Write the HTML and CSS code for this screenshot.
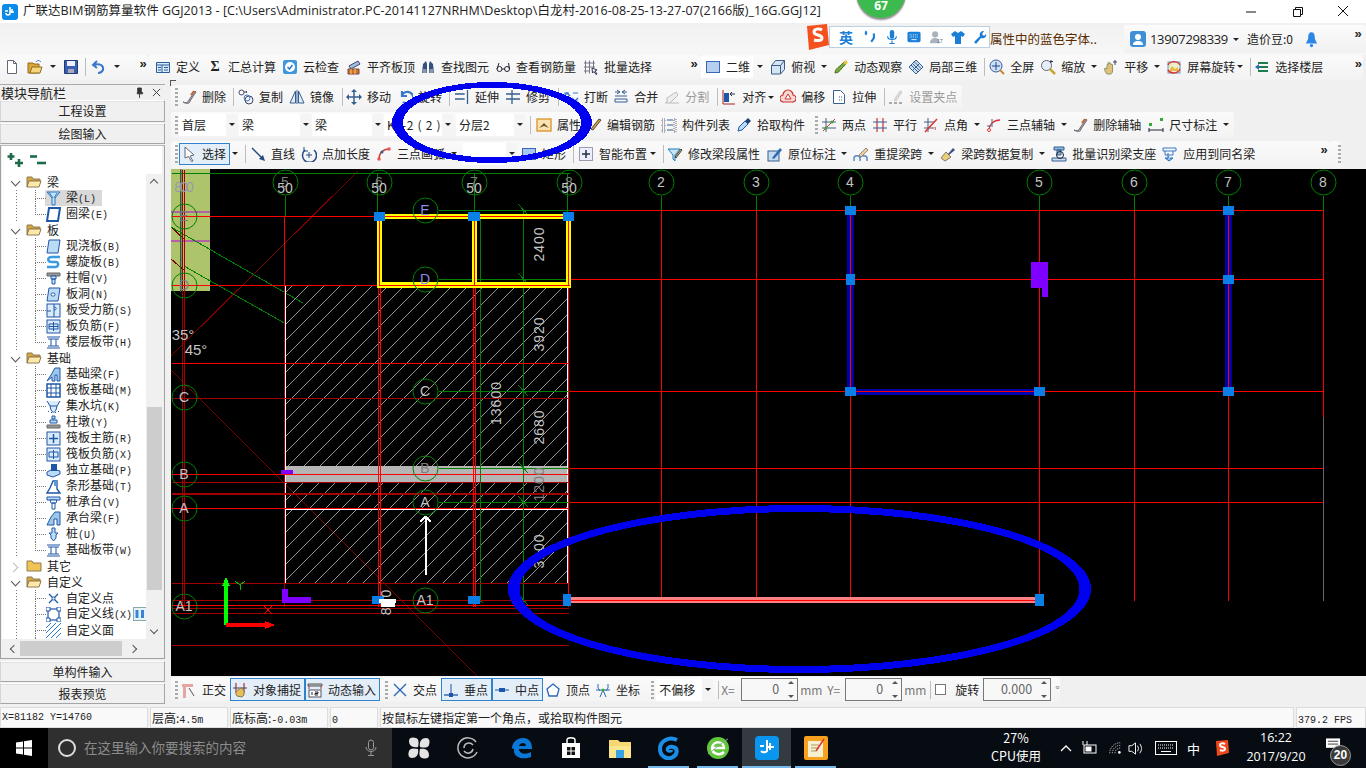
FILE: index.html
```html
<!DOCTYPE html>
<html lang="zh-CN">
<head>
<meta charset="utf-8">
<title>广联达BIM钢筋算量软件 GGJ2013</title>
<link rel="stylesheet" href="styles.css">
</head>
<body>
<div class="app">
  <header class="title">
    <svg class="appicon" viewBox="0 0 16 16"><rect width="16" height="16" rx="3" fill="#0a8be8"/><path d="M8 3v6a2 2 0 0 1-4 0M8 8h4M3 7h3M10 5v4" fill="none" stroke="#fff" stroke-width="1.6"/></svg>
    <span class="title-text">广联达BIM钢筋算量软件 GGJ2013 - [C:\Users\Administrator.PC-20141127NRHM\Desktop\白龙村-2016-08-25-13-27-07(2166版)_16G.GGJ12]</span>
    <div class="winbtns">
      <svg viewBox="0 0 46 23"><path d="M18 12h10" stroke="#111" fill="none"/></svg>
      <svg viewBox="0 0 46 23"><path d="M19.500 9.500h7v7h-7zM21.500 9V7.500h7v7H27" stroke="#111" fill="none"/></svg>
      <svg viewBox="0 0 46 23"><path d="M18 6l10 10M28 6 18 16" stroke="#111" fill="none"/></svg>
    </div>
  </header>

  <div class="menu">
    <span class="hint">属性中的蓝色字体..</span>
    <div class="account">
      <svg class="ava" viewBox="0 0 16 16"><rect width="16" height="16" rx="3" fill="#3f8fd6"/><circle cx="8" cy="6" r="3" fill="#fff"/><path d="M3 14c0-3 2-4 5-4s5 1 5 4z" fill="#fff"/></svg>
      <span class="phone">13907298339</span>
      <i class="ar"></i>
      <span class="beans">造价豆:0</span>
      <svg class="bell" viewBox="0 0 16 20"><path d="M8 1c-3 0-4 3-4 6 0 4-2 6-3 8h14c-1-2-3-4-3-8 0-3-1-6-4-6z" fill="#2c86e8"/><circle cx="8" cy="17.500" r="2" fill="#2c86e8"/></svg>
      <b class="more">»</b>
    </div>
  </div>

  <div class="row row1">
    <div class="bar">
      <svg class="ib m4" viewBox="0 0 16 16"><path d="M3.500 1.500h6l3 3v10h-9z" fill="#fff" stroke="#667"/><path d="M9.500 1.500v3h3" fill="none" stroke="#667"/></svg>
      <svg class="ib m7" viewBox="0 0 16 16"><path d="M1 4h5l1 1h5v9H1z" fill="#d9a53c" stroke="#8f6d1c"/><path d="M3 14l2-6h10l-2 6z" fill="#f5d67e" stroke="#8f6d1c"/><path d="M9 3c1-2 3-2 5 0" fill="none" stroke="#3a78c9"/></svg>
      <i class="ar m4"></i>
      <svg class="ib m4" viewBox="0 0 16 16"><path d="M1.500 1.500h13v13h-13z" fill="#3b5fb0" stroke="#223a78"/><path d="M4 2h8v5H4z" fill="#eef"/><path d="M5 10h6v4H5z" fill="#aab"/></svg>
      <i class="sep m6"></i>
      <svg class="ib m5" viewBox="0 0 16 16"><path d="M6 2 2 6l4 3M3 6c5-2 10 0 9 5-1 2-3 3-5 3" stroke="#3a78c9" stroke-width="2" fill="none"/></svg>
      <i class="ar m4"></i>
      <b class="more m15">»</b>
    </div>
    <div class="bar">
      <div class="t m3"><svg class="ic" viewBox="0 0 16 16"><path d="M1.500 3.500h13v10h-13z" fill="#dcebf8" stroke="#2a5d9c"/><path d="M1.500 6h13M7 6v7.500M3 8.500h3M3 11h3M9 8.500h4M9 11h4" stroke="#2a5d9c" fill="none"/></svg><span>定义</span></div>
      <div class="t"><b class="sigma">Σ</b><span>汇总计算</span></div>
      <div class="t mn1"><svg class="ic" viewBox="0 0 16 16"><rect x="1" y="1" width="14" height="14" rx="2" fill="#3c97dd"/><circle cx="8" cy="8" r="5" fill="#fff"/><path d="M5.500 8l2 2 3-4" stroke="#2a78c0" stroke-width="1.500" fill="none"/></svg><span>云检查</span></div>
      <div class="t"><svg class="ic" viewBox="0 0 16 16"><path d="M3 7l9-5 2 3-9 5z" fill="#9cc0e4" stroke="#446"/><path d="M2 10h11v5H2z" fill="#c9762c" stroke="#744"/><path d="M5 10v5M9 10v5" stroke="#fc6"/></svg><span>平齐板顶</span></div>
      <div class="t mn2"><svg class="ic" viewBox="0 0 16 16"><path d="M2 14l1-9 3-3 1 3v9zM9 14V5l1-3 3 3 1 9z" fill="#33507f"/><rect x="2.500" y="10" width="4" height="4" fill="#89a"/><rect x="9.500" y="10" width="4" height="4" fill="#89a"/></svg><span>查找图元</span></div>
      <div class="t mn1"><svg class="ic" viewBox="0 0 16 16"><circle cx="4.500" cy="10" r="2.500" fill="none" stroke="#223"/><circle cx="12" cy="10" r="2.500" fill="none" stroke="#223"/><path d="M7 10h2.500M2 10l2-6M14.500 10l-1-6" stroke="#223" fill="none"/></svg><span>查看钢筋量</span></div>
      <div class="t"><svg class="ic" viewBox="0 0 16 16"><path d="M2.500 1.500v13M6.500 1.500v13M10.500 1.500v8M1 4h11M1 8h11M1 12h6" stroke="#778" fill="none"/><path d="M9 9l5 2-2 1 2 3-1 .5-2-3-1.500 1.500z" fill="#fff" stroke="#335"/></svg><span>批量选择</span></div>
      <b class="more m34">»</b>
    </div>
    <div class="bar">
      <div class="t m2 white"><svg class="ic" viewBox="0 0 16 16"><rect x="1.500" y="2.500" width="13" height="11" fill="#b6cff0" stroke="#3767b5"/></svg><span>二维</span></div>
      <i class="ar m1"></i>
      <div class="t"><svg class="ic" viewBox="0 0 16 16"><path d="M1.500 6.500l4-5h9v9l-4 4.500h-9z" fill="#d3e4f5" stroke="#3c5d80"/><path d="M1.500 6.500h9v8.500M10.500 6.500l4-5" fill="none" stroke="#3c5d80"/></svg><span>俯视</span></div>
      <i class="ar"></i>
      <div class="t mn1"><svg class="ic" viewBox="0 0 16 16"><path d="M2 14c0-3 2-5 5-7l5-5 2 2-5 5c-2 3-4 5-7 5z" fill="#7aa93c" stroke="#4a7320"/><circle cx="12.500" cy="3.500" r="2" fill="#e8c33c"/></svg><span>动态观察</span></div>
      <div class="t mn1"><svg class="ic" viewBox="0 0 16 16"><path d="M8 1l7 7-7 7-7-7z" fill="#cfe0f2" stroke="#345f8f"/><path d="M4.500 4.500l7 7M11.500 4.500l-7 7M6 2.500l7 7M3 6l7 7" stroke="#345f8f" fill="none"/></svg><span>局部三维</span></div>
      <i class="sep m4"></i>
      <div class="t"><svg class="ic" viewBox="0 0 16 16"><circle cx="7" cy="7" r="6" fill="#cfe0f6" stroke="#3a5e96"/><path d="M7 3v8M3 7h8" stroke="#23468c"/><path d="M11 11l4 4" stroke="#c8892c" stroke-width="2"/></svg><span>全屏</span></div>
      <div class="t mn1"><svg class="ic" viewBox="0 0 16 16"><circle cx="6.500" cy="6.500" r="5" fill="#e6eef8" stroke="#667"/><path d="M10 10l5 5" stroke="#c8a82c" stroke-width="2.500"/><path d="M11 1v3M13 2.500h-3" stroke="#335" fill="none"/></svg><span>缩放</span></div>
      <i class="ar"></i>
      <div class="t mn1"><svg class="ic" viewBox="0 0 16 16"><path d="M4 15c-2-2-3-5-2-6l2 1V6c0-1 1-1 1 0V4c0-1 1.500-1 1.500 0v1c0-1 1.500-1 1.500 0v1c0-1 1.500-1 1.500 0v6c0 2-1 3-2 3z" fill="#e5c07a" stroke="#896"/><path d="M12 1v5M10 3h4" stroke="#446" fill="none"/></svg><span>平移</span></div>
      <i class="ar"></i>
      <div class="t mn1"><svg class="ic" viewBox="0 0 16 16"><rect x="2" y="3" width="12" height="11" fill="#e7f0c9" stroke="#69c"/><path d="M4 10l2-3 3 3 3-2v4H4z" fill="#e8b84a"/><path d="M2 6a7 7 0 0 1 12 0M14 10a7 7 0 0 1-12 1" fill="none" stroke="#d33" stroke-width="1.400"/></svg><span>屏幕旋转</span></div>
      <i class="ar mn4"></i>
      <i class="sep m4"></i>
      <div class="t mn1"><svg class="ic" viewBox="0 0 16 16"><path d="M4 4h10M4 8h10M4 12h10" stroke="#1e7d4c" stroke-width="2"/><path d="M1 8l4-3v6z" fill="#2b6cb8"/></svg><span>选择楼层</span></div>
      <b class="more m27">»</b>
    </div>
  </div>

  <div class="work">
    <aside class="panel">
      <div class="panel-head"><span>模块导航栏</span><div class="pin"><svg viewBox="0 0 10 12"><path d="M3 1h4v5h1.500v1.500h-6V6H3zM5 7.500V12" fill="#333" stroke="#333"/></svg><svg viewBox="0 0 10 10"><path d="M1 1l8 8M9 1 1 9" stroke="#333" fill="none"/></svg></div></div>
      <button class="tab t1">工程设置</button>
      <button class="tab t2">绘图输入</button>
      <div class="frame">
        <div class="tree-tools"><svg viewBox="0 0 18 16"><path d="M4 1v7M.5 4.500h7M12 7v8M8 11h8" stroke="#1d6b4a" stroke-width="2.600" fill="none"/></svg><svg viewBox="0 0 18 16"><path d="M1 4.500h7" stroke="#1d6b4a" stroke-width="2.600"/><path d="M8 11h9" stroke="#1d6b4a" stroke-width="2.600"/></svg></div>
        <div class="tree-body">
          <div class="tree">
            <div class="node"><i class="chev"></i><svg class="folder" viewBox="0 0 16 12"><path d="M1 1h5l1 2h7v2H3l-2 6z" fill="#d9a53c" stroke="#8f7a50"/><path d="M1 11l2-6h12l-2 6z" fill="#fde9a9" stroke="#8f7a50"/></svg><span>梁</span></div>
            <div class="kids">
              <div class="leaf sel"><svg class="ti" viewBox="0 0 15 15"><path d="M1 1h13L9 7v7H6V7z" fill="#c9e4f8" stroke="#2a78c0"/><path d="M3 1l4 6M11 2 8 7" stroke="#2a78c0" fill="none"/></svg><span>梁<em>(L)</em></span></div>
              <div class="leaf"><svg class="ti" viewBox="0 0 15 15"><path d="M3 1h11l-2 13H1z" fill="#fff" stroke="#1f57a8" stroke-width="2"/><path d="M5 3.500h6.500l-1 8H4z" fill="#fff"/></svg><span>圈梁<em>(E)</em></span></div>
            </div>
            <div class="node"><i class="chev"></i><svg class="folder" viewBox="0 0 16 12"><path d="M1 1h5l1 2h7v2H3l-2 6z" fill="#d9a53c" stroke="#8f7a50"/><path d="M1 11l2-6h12l-2 6z" fill="#fde9a9" stroke="#8f7a50"/></svg><span>板</span></div>
            <div class="kids">
              <div class="leaf"><svg class="ti" viewBox="0 0 15 15"><path d="M3 1h11l-2 13H1z" fill="#bcdcf6" stroke="#1f57a8"/></svg><span>现浇板<em>(B)</em></span></div>
              <div class="leaf"><svg class="ti" viewBox="0 0 15 15"><path d="M14 2H6C1 2 1 7 6 7h4c3 0 3 5-1 5H1" fill="none" stroke="#3a9be0" stroke-width="2.500"/></svg><span>螺旋板<em>(B)</em></span></div>
              <div class="leaf"><svg class="ti" viewBox="0 0 15 15"><path d="M1 2h13v3H1z" fill="#999" stroke="#666"/><path d="M5 5h5v3H5zM6 8h3v5H6z" fill="#c9e4f8" stroke="#1f57a8"/></svg><span>柱帽<em>(V)</em></span></div>
              <div class="leaf"><svg class="ti" viewBox="0 0 15 15"><path d="M3 1h11l-2 13H1z" fill="#bcdcf6" stroke="#1f57a8"/><rect x="5" y="6" width="4" height="3" rx="1.500" fill="#fff" stroke="#1f57a8"/></svg><span>板洞<em>(N)</em></span></div>
              <div class="leaf"><svg class="ti" viewBox="0 0 15 15"><rect x="1" y="1" width="13" height="13" fill="#d9ebfa" stroke="#1f57a8"/><path d="M8 1v13M1 8h4M8 4c3 0 3 3 0 3" fill="none" stroke="#1f57a8"/></svg><span>板受力筋<em>(S)</em></span></div>
              <div class="leaf"><svg class="ti" viewBox="0 0 15 15"><rect x="1" y="1" width="13" height="13" fill="#d9ebfa" stroke="#1f57a8"/><path d="M7.500 3v9M3 5h9v5H3zM3 7.500h9" fill="none" stroke="#1f57a8"/></svg><span>板负筋<em>(F)</em></span></div>
              <div class="leaf"><svg class="ti" viewBox="0 0 15 15"><path d="M1 2h13M1 13h13M2 4h11M2 11h11M5 4v7M10 4v7" fill="none" stroke="#1f57a8"/></svg><span>楼层板带<em>(H)</em></span></div>
            </div>
            <div class="node"><i class="chev"></i><svg class="folder" viewBox="0 0 16 12"><path d="M1 1h5l1 2h7v2H3l-2 6z" fill="#d9a53c" stroke="#8f7a50"/><path d="M1 11l2-6h12l-2 6z" fill="#fde9a9" stroke="#8f7a50"/></svg><span>基础</span></div>
            <div class="kids">
              <div class="leaf"><svg class="ti" viewBox="0 0 15 15"><path d="M1 14l4-6 4-7h5v13h-3V8H9v6H6V10z" fill="#9cc6ea" stroke="#1f57a8"/></svg><span>基础梁<em>(F)</em></span></div>
              <div class="leaf"><svg class="ti" viewBox="0 0 15 15"><rect x="1" y="1" width="13" height="13" fill="none" stroke="#1f57a8" stroke-width="1.500"/><path d="M5 1v13M10 1v13M1 5h13M1 10h13" stroke="#1f57a8" fill="none"/></svg><span>筏板基础<em>(M)</em></span></div>
              <div class="leaf"><svg class="ti" viewBox="0 0 15 15"><path d="M1 2l3 5h7l3-5M4 7l1 4c2 3 3 3 5 0l1-4" fill="#d9ebfa" stroke="#1f57a8"/><path d="M2 12l1 1M5 13l1 1M9 13l1 1M12 12l1 1" stroke="#1f57a8"/></svg><span>集水坑<em>(K)</em></span></div>
              <div class="leaf"><svg class="ti" viewBox="0 0 15 15"><path d="M6 1h3v3H6zM4 5h7v3H4z" fill="#bcdcf6" stroke="#1f57a8"/><path d="M1 10h13v3H1z" fill="#999" stroke="#666"/></svg><span>柱墩<em>(Y)</em></span></div>
              <div class="leaf"><svg class="ti" viewBox="0 0 15 15"><rect x="1" y="1" width="13" height="13" fill="#d9ebfa" stroke="#1f57a8"/><path d="M7.500 3v9M3 7.500h9" fill="none" stroke="#1f57a8" stroke-width="1.500"/></svg><span>筏板主筋<em>(R)</em></span></div>
              <div class="leaf"><svg class="ti" viewBox="0 0 15 15"><rect x="1" y="1" width="13" height="13" fill="#d9ebfa" stroke="#1f57a8"/><path d="M3 5h9v5H3zM7.500 3v9" fill="none" stroke="#1f57a8"/></svg><span>筏板负筋<em>(X)</em></span></div>
              <div class="leaf"><svg class="ti" viewBox="0 0 15 15"><path d="M1 9l6-3 7 2v3l-7 3-6-2z" fill="#bcdcf6" stroke="#1f57a8"/><path d="M5 1h6v7H5z" fill="#1f57a8"/></svg><span>独立基础<em>(P)</em></span></div>
              <div class="leaf"><svg class="ti" viewBox="0 0 15 15"><path d="M1 14h13l-3-4V2H7L4 9z" fill="#fff" stroke="#1f57a8" stroke-width="1.400"/><path d="M8 2h3v5H8z" fill="#5f9ad6"/></svg><span>条形基础<em>(T)</em></span></div>
              <div class="leaf"><svg class="ti" viewBox="0 0 15 15"><path d="M1 2h13v3H1z" fill="#bcdcf6" stroke="#1f57a8"/><path d="M4 5h7l-1 3H5zM6 8h3v6H6z" fill="#fff" stroke="#1f57a8"/></svg><span>桩承台<em>(V)</em></span></div>
              <div class="leaf"><svg class="ti" viewBox="0 0 15 15"><path d="M1 14l4-8 4-5h5v13h-3V8H8v6z" fill="#9cc6ea" stroke="#1f57a8"/></svg><span>承台梁<em>(F)</em></span></div>
              <div class="leaf"><svg class="ti" viewBox="0 0 15 15"><path d="M6 1h3v5h3l-2 2v3l-2.500 3L5 11V8L3 6h3z" fill="#bcdcf6" stroke="#1f57a8"/></svg><span>桩<em>(U)</em></span></div>
              <div class="leaf"><svg class="ti" viewBox="0 0 15 15"><path d="M1 2h13M1 13h13M2 4h11M2 11h11M5 4v7M10 4v7" fill="none" stroke="#1f57a8"/></svg><span>基础板带<em>(W)</em></span></div>
            </div>
            <div class="node"><i class="chev closed"></i><svg class="folder" viewBox="0 0 16 12"><path d="M1 1h5l1 2h8v8H1z" fill="#f0c454" stroke="#8f7a50"/></svg><span>其它</span></div>
            <div class="node"><i class="chev"></i><svg class="folder" viewBox="0 0 16 12"><path d="M1 1h5l1 2h7v2H3l-2 6z" fill="#d9a53c" stroke="#8f7a50"/><path d="M1 11l2-6h12l-2 6z" fill="#fde9a9" stroke="#8f7a50"/></svg><span>自定义</span></div>
            <div class="kids">
              <div class="leaf"><svg class="ti" viewBox="0 0 15 15"><path d="M3 3l9 9M12 3l-9 9" stroke="#1f57a8" stroke-width="1.300"/><circle cx="7.500" cy="7.500" r="1.500" fill="#fff" stroke="#1f57a8"/></svg><span>自定义点</span></div>
              <div class="leaf"><svg class="ti" viewBox="0 0 15 15"><rect x="2" y="2" width="11" height="11" fill="none" stroke="#1f57a8" stroke-width="1.200"/><path d="M0 0h4v4H0zM11 0h4v4h-4zM0 11h4v4H0zM11 11h4v4h-4z" fill="#fff" stroke="#1f57a8"/></svg><span>自定义线<em>(X)</em></span><svg class="colicon" viewBox="0 0 14 14"><rect x=".5" y=".5" width="13" height="13" fill="#e8f2fb" stroke="#8aa"/><path d="M2.500 3h3v8h-3zM8 3h3v8H8z" fill="#3a86d6"/></svg></div>
              <div class="leaf"><svg class="ti" viewBox="0 0 15 15"><path d="M0 5 5 0M0 10 10 0M0 15 15 0M5 15 15 5M10 15l5-5" stroke="#2a78d0" fill="none"/></svg><span>自定义面</span></div>
              <div class="leaf"><svg class="ti" viewBox="0 0 15 15"><path d="M1 2h13v11H1z" fill="none" stroke="#334"/></svg><span>自定义构件</span></div>
            </div>
          </div>
          <div class="vscroll"><i class="up"></i><div class="vthumb"></div><i class="down"></i></div>
        </div>
        <div class="hscroll"><i class="left"></i><div class="hthumb"></div><i class="right"></i></div>
      </div>
      <button class="tab t3">单构件输入</button>
      <button class="tab t4">报表预览</button>
    </aside>

    <div class="right">
      <div class="row row2">
        <div class="bar pad">
          <i class="grip m4"></i>
          <div class="t mn1"><svg class="ic" viewBox="0 0 16 16"><path d="M2 13c2 1 5 1 6-2L14 2l1 1-6 9c0 3-4 3-7 1z" fill="#caa" stroke="#667"/><path d="M10 6l3-4" stroke="#c63" stroke-width="2"/></svg><span>删除</span></div>
          <i class="sep m4"></i>
          <div class="t"><svg class="ic" viewBox="0 0 16 16"><circle cx="3.500" cy="3.500" r="2.500" fill="none" stroke="#446"/><circle cx="11" cy="11" r="4" fill="none" stroke="#446"/><circle cx="9" cy="9" r="3" fill="none" stroke="#3a78c9"/><path d="M6 3h3M9 3l-1-1M9 3 8 4" stroke="#446" fill="none"/></svg><span>复制</span></div>
          <div class="t mn1"><svg class="ic" viewBox="0 0 16 16"><path d="M6.500 2 1 14h5.500zM9.500 2 15 14H9.500z" fill="#e6eef8" stroke="#345f8f"/><path d="M8 1v14" stroke="#345f8f"/></svg><span>镜像</span></div>
          <i class="sep m5"></i>
          <div class="t mn1"><svg class="ic" viewBox="0 0 16 16"><path d="M8 1v14M1 8h14" stroke="#345f8f" stroke-width="1.500"/><path d="M8 0l3 3H5zM8 16l3-3H5zM0 8l3-3v6zM16 8l-3-3v6z" fill="#345f8f"/></svg><span>移动</span></div>
          <div class="t mn1"><svg class="ic" viewBox="0 0 16 16"><path d="M5 2v5h5M5 6a6 6 0 1 1 1 7" fill="none" stroke="#3a78c9" stroke-width="2.200"/></svg><span>旋转</span></div>
          <i class="sep m4"></i>
          <div class="t"><svg class="ic" viewBox="0 0 16 16"><path d="M1 5h9M1 10h9M13.500 1v14" stroke="#345f8f" stroke-width="1.300" fill="none"/><path d="M10 5h2M10 10h2" stroke="#345f8f" stroke-dasharray="1 1"/></svg><span>延伸</span></div>
          <div class="t mn1"><svg class="ic" viewBox="0 0 16 16"><path d="M1 5h14M1 10h14M7 1v14" stroke="#345f8f" stroke-width="1.300" fill="none"/></svg><span>修剪</span></div>
          <i class="sep m5"></i>
          <div class="t"><svg class="ic" viewBox="0 0 16 16"><path d="M1 4h5M1 12h5M10 4h5M10 12h5" stroke="#3a78c9" fill="none"/><path d="M1 7l3-3 3 3M9 9l3 3 3-3" stroke="#3a78c9" fill="none" stroke-width="1.500"/></svg><span>打断</span></div>
          <div class="t mn2"><svg class="ic" viewBox="0 0 16 16"><path d="M2 10h12v3H2z" fill="none" stroke="#345f8f"/><path d="M2 3h5M9 3h5M4 1l3 2-3 2M12 1 9 3l3 2M2 7h12" stroke="#345f8f" fill="none"/></svg><span>合并</span></div>
          <div class="t mn1 off"><svg class="ic" viewBox="0 0 16 16"><path d="M1 14h14M3 14V9l9-6 2 3-8 8" fill="#eee" stroke="#bbb"/></svg><span>分割</span></div>
          <i class="sep m5"></i>
          <div class="t mn1"><svg class="ic" viewBox="0 0 16 16"><path d="M2 1v14h12" stroke="#a22" fill="none"/><path d="M3 4h5v9H3z" fill="#1f57a8"/><path d="M14 5H9M11 3 9 5l2 2" stroke="#234" fill="none"/></svg><span>对齐</span></div>
          <i class="ar mn4"></i>
          <div class="t mn1"><svg class="ic" viewBox="0 0 16 16"><path d="M4 13a3.500 3.500 0 0 1-1-7 5 5 0 0 1 10 0 3.500 3.500 0 0 1-1 7z" fill="#f4d9d0" stroke="#c33" stroke-width="1.200"/><path d="M8 5l3 5H5z" fill="#fff" stroke="#c33"/></svg><span>偏移</span></div>
          <div class="t mn1"><svg class="ic" viewBox="0 0 16 16"><path d="M2.500 1.500h7l4 4v9h-11z" fill="#fff" stroke="#345f8f"/><path d="M8 8h4M8 11h4" stroke="#345f8f" stroke-dasharray="1 1"/></svg><span>拉伸</span></div>
          <i class="sep m5"></i>
          <div class="t mn1 off"><svg class="ic" viewBox="0 0 16 16"><path d="M6 11 12 2l2 1-6 9z" fill="#ddd" stroke="#ccc"/><path d="M1 14h3M6 14h3M11 14h3" stroke="#aaa" stroke-width="2"/></svg><span>设置夹点</span></div>
        </div>
      </div>

      <div class="row row3">
        <div class="bar">
          <i class="grip m4"></i>
          <div class="combo c1 m1"><span>首层</span><i class="ar"></i></div>
          <div class="combo c2 m2"><span>梁</span><i class="ar"></i></div>
          <div class="combo c3 m1"><span>梁</span><i class="ar"></i></div>
          <div class="combo c4 wide m1"><span>KL-2 ( 2 )</span><i class="ar"></i></div>
          <div class="combo c4 m3"><span>分层2</span><i class="ar"></i></div>
          <i class="sep m5"></i>
          <div class="t m1"><svg class="ic" viewBox="0 0 16 16"><rect x="1" y="2" width="14" height="12" fill="#fbe2b0" stroke="#d99326" stroke-width="1.300"/><path d="M3 11l5-5 5 5-5-2z" fill="#6a5a2a"/></svg><span>属性</span></div>
          <div class="t mn2"><svg class="ic" viewBox="0 0 16 16"><path d="M5 12 13 2l2 1-8 10z" fill="#e5a03c" stroke="#444"/></svg><span>编辑钢筋</span></div>
          <div class="t mn1"><svg class="ic" viewBox="0 0 16 16"><path d="M1 2h3v3H1zM1 7h3v3H1zM1 12h3v3H1zM13 2h2v13h-2z" fill="none" stroke="#667" stroke-dasharray="1 1"/><path d="M6 3h6M6 8h6M6 13h6" stroke="#345f8f"/></svg><span>构件列表</span></div>
          <div class="t mn1"><svg class="ic" viewBox="0 0 16 16"><path d="M2 14l1-4 6-6 3 3-6 6z" fill="#bcdcf6" stroke="#1f57a8"/><path d="M9 4l3-3 3 3-3 3z" fill="#1f3f78"/></svg><span>拾取构件</span></div>
        </div>
        <div class="bar">
          <i class="grip m7"></i>
          <div class="t mn1"><svg class="ic" viewBox="0 0 16 16"><path d="M1 5h14M1 11h14M5 1v14" stroke="#4a5a80"/><path d="M2 14 14 2" stroke="#b33"/><circle cx="5" cy="11" r="1.500" fill="#3a3"/><circle cx="11" cy="5" r="1.500" fill="#3a3"/></svg><span>两点</span></div>
          <div class="t mn1"><svg class="ic" viewBox="0 0 16 16"><path d="M5 1v14M11 1v14" stroke="#c33" stroke-width="1.200"/><path d="M1 5h14M1 11h14" stroke="#335a9a" stroke-width="1.200"/></svg><span>平行</span></div>
          <div class="t mn1"><svg class="ic" viewBox="0 0 16 16"><path d="M5 1v14M1 5h10M1 11h10" stroke="#4a5a80"/><path d="M2 15 14 2" stroke="#d33" stroke-width="1.500"/><path d="M12 10a3 3 0 0 1 0 3" stroke="#d33" fill="none"/></svg><span>点角</span></div>
          <i class="ar"></i>
          <div class="t mn1"><svg class="ic" viewBox="0 0 16 16"><path d="M3 14C3 7 8 3 14 3" fill="none" stroke="#d33" stroke-width="1.300"/><path d="M1 9h6M6 2v6" stroke="#4a5a80"/><circle cx="3" cy="13" r="1.500" fill="#fff" stroke="#d33"/></svg><span>三点辅轴</span></div>
          <i class="ar"></i>
          <div class="t mn2"><svg class="ic" viewBox="0 0 16 16"><path d="M2 13c2 1 5 1 6-2L14 2l1 1-6 9c0 3-4 3-7 1z" fill="#caa" stroke="#667"/><path d="M10 6l3-4" stroke="#c63" stroke-width="2"/></svg><span>删除辅轴</span></div>
          <div class="t"><svg class="ic" viewBox="0 0 16 16"><path d="M1 11v4M15 11v4M1 13h14" stroke="#223"/><rect x="1" y="6" width="3" height="3" fill="#3a3"/><rect x="12" y="1" width="3" height="3" fill="#3a3"/></svg><span>尺寸标注</span></div>
          <i class="ar"></i>
        </div>
      </div>

      <div class="row row4">
        <div class="bar">
          <i class="grip m4"></i>
          <div class="t sel m1"><svg class="ic" viewBox="0 0 16 16"><path d="M4 1l9 8-4 1 3 5-1.500 .5-3-5L4 12z" fill="#fff" stroke="#667"/></svg><span>选择</span></div>
          <i class="ar mn1"></i>
          <i class="sep m4"></i>
          <div class="t"><svg class="ic" viewBox="0 0 16 16"><path d="M2 2l11 11" stroke="#234a80" stroke-width="1.500"/><path d="M15 15l-6-2 4-4z" fill="#234a80"/></svg><span>直线</span></div>
          <div class="t mn1"><svg class="ic" viewBox="0 0 16 16"><path d="M13 4a7 7 0 1 1-9 0" fill="none" stroke="#234a80" stroke-width="1.500"/><path d="M3 1v4h4" fill="none" stroke="#234a80"/><path d="M8 6v6M5 9h6" stroke="#234a80"/></svg><span>点加长度</span></div>
          <div class="t mn1"><svg class="ic" viewBox="0 0 16 16"><path d="M3 13C3 7 7 3 13 3" fill="none" stroke="#c43" stroke-width="1.500"/><circle cx="3" cy="13" r="1.800" fill="#e55"/><circle cx="13" cy="3" r="1.800" fill="#e55"/><circle cx="6" cy="6" r="1.500" fill="#345f8f"/></svg><span>三点画弧</span></div>
          <i class="ar"></i>
          <div class="combo c5 m3"><span></span><i class="ar"></i></div>
          <div class="t"><svg class="ic" viewBox="0 0 16 16"><rect x="1.500" y="2.500" width="13" height="11" fill="#a9c7ee" stroke="#3767b5"/></svg><span>矩形</span></div>
          <i class="sep m4"></i>
          <div class="t"><svg class="ic" viewBox="0 0 16 16"><path d="M1.500 1.500h13v13h-13z" fill="#eef" stroke="#446" stroke-dasharray="1 1"/><path d="M8 4v8M4 8h8" stroke="#234" stroke-width="1.500"/></svg><span>智能布置</span></div>
          <i class="ar mn3"></i>
          <i class="sep m4"></i>
          <div class="t mn1"><svg class="ic" viewBox="0 0 16 16"><path d="M1 3h12L8 9v6l-2-2V9z" fill="#c9e4f8" stroke="#1f7db8"/><path d="M8 11 14 3l1 1-6 8z" fill="#e8b84a" stroke="#444"/></svg><span>修改梁段属性</span></div>
          <div class="t"><svg class="ic" viewBox="0 0 16 16"><rect x="1" y="5" width="11" height="10" fill="#c7daf0" stroke="#345f8f"/><path d="M5 12 13 2l2 2-8 9z" fill="#2f68b8"/></svg><span>原位标注</span></div>
          <i class="ar mn1"></i>
          <div class="t mn1"><svg class="ic" viewBox="0 0 16 16"><path d="M1 15v-3c0-3 6-3 6 0v3M7 15v-3c0-3 7-3 7 0v3" fill="none" stroke="#5a8ac0" stroke-width="1.500"/><path d="M6 9l7-7 2 2-7 7z" fill="#eecfa0" stroke="#987"/></svg><span>重提梁跨</span></div>
          <i class="ar"></i>
          <div class="t mn1"><svg class="ic" viewBox="0 0 16 16"><path d="M1 12l5-6 5 5-6 4z" fill="#e8cf7c" stroke="#876"/><path d="M8 8l5-6 2 2-6 5z" fill="#3c4f80"/></svg><span>梁跨数据复制</span></div>
          <i class="ar"></i>
          <div class="t mn1"><svg class="ic" viewBox="0 0 16 16"><path d="M3 1h10v3H3zM6 4h4v5H6z" fill="#8fb8e0" stroke="#345f8f"/><path d="M1 12h14v3H1z" fill="#cde" stroke="#345f8f"/><circle cx="9" cy="9" r="3.500" fill="none" stroke="#223"/></svg><span>批量识别梁支座</span></div>
          <div class="t mn1"><svg class="ic" viewBox="0 0 16 16"><path d="M1 2h13v3H1z" fill="none" stroke="#3a78c9"/><path d="M3 5v4h8V5" fill="none" stroke="#3a78c9"/><path d="M6 7v5H3l4 3 4-3H8" fill="#8fc0ee" stroke="#2a68b8"/></svg><span>应用到同名梁</span></div>
          <b class="more m61">»</b>
        </div>
        <div class="bar">
          <i class="grip m9"></i>
        </div>
      </div>

      <svg class="cad" viewBox="170 168 1196 507" aria-label="CAD drawing">
        <defs>
          <pattern id="hatch" width="16" height="16" patternUnits="userSpaceOnUse"><path d="M0 16 16 0" class="hl"/></pattern>
        </defs>
        <rect x="170" y="168" width="1196" height="507" class="bg"/>
        <rect x="170" y="168" width="39" height="122" class="olive"/>
        <path d="M170 211h39M170 240h39M180 168v122" class="pink"/>

        <path d="M357 170 170 355M231 430 476 675M170 369l61 61M170 226l13 12M170 258l14 12" class="dk thin"/>
        <path d="M170 226l132 76M183 265l102 58" class="gr"/>

        <rect x="284" y="284" width="283" height="298" class="hatch"/>
        <rect x="284" y="465" width="283" height="16" class="gband"/>

        <g transform="translate(.5 .5)">
          <path d="M284 284v298M284 284h92M284 508h283M284 582h283M566 284v298" class="wh1"/>
          <path d="M170 172h398M179 168v122M376 172v43M473 172v43M479 215v385M522 209v391M566 172v43M284 194v21" class="gr"/>
          <path d="M437 209h131M437 278h131M437 390h131M437 467h131M437 501h131" class="gr"/>
          <path d="M517 203l10 11M517 272l10 11M517 384l10 11M517 461l10 11M517 495l10 11M517 593l10 11M472 209l9 9M473 593l9 9" class="gr"/>

          <path d="M181 168v437M183 168v437M283 284v321M170 397h397M170 481h397M170 492h397M170 493h397M170 582h397M170 599h397M170 607h397M170 612h397M170 644h397" class="dk"/>
          <path d="M170 215h208M170 284h397M170 362h397M170 473h397M170 507h397M170 604h397M283 215v69M377 215v390M379 215v390M472 215v390M474 215v390M567 284v321M568 209h754M568 278h754M568 390h754M568 467h754M568 501h754" class="rd"/>
          <path d="M660 209v390M755 209v390M849 209v390M1038 209v390M1133 209v390M1227 209v390M1322 209v206" class="rd"/>
          <path d="M1322 415v184" class="gy"/>
          <path d="M660 194v15M755 194v15M849 194v15M1038 194v15M1133 194v15M1227 194v15M1322 194v15" class="gr"/>
        </g>

        <path d="M376 213h194v5H376zM376 281h194v6H376zM376 213h5v74h-5zM471 213h5v74h-5zM565 213h5v74h-5z" class="yl"/>
        <g transform="translate(.5 .5)"><path d="M378 215h190M378 284h190M378 215v69M473 215v69M567 215v69" class="rd"/></g>

        <rect x="846" y="209" width="7" height="181" class="wall"/><rect x="849" y="388" width="189" height="6" class="wall"/><rect x="1224" y="209" width="7" height="181" class="wall"/>
        <g transform="translate(.5 .5)"><path d="M849 209v181M849 390h189M1227 209v181" class="rd"/></g>
        <path d="M1030 261h17v35h-6v-9h-11z" class="vio"/>
        <path d="M281 588h6v8h23v6h-29zM280 469h12v4h-12z" class="vio"/>
        <rect x="568" y="596" width="470" height="6" class="pinkbeam"/>
        <g transform="translate(.5 .5)"><path d="M568 599h470" class="rd"/></g>

        <g class="hd">
          <rect x="373" y="211" width="11" height="9"/><rect x="467" y="211" width="12" height="9"/><rect x="562" y="211" width="11" height="9"/>
          <rect x="844" y="205" width="11" height="9"/><rect x="845" y="273" width="9" height="11"/><rect x="844" y="386" width="11" height="9"/><rect x="1033" y="386" width="11" height="9"/>
          <rect x="1222" y="205" width="11" height="9"/><rect x="1222" y="274" width="11" height="9"/><rect x="1222" y="386" width="11" height="9"/>
          <rect x="371" y="595" width="12" height="8"/><rect x="467" y="595" width="12" height="8"/><rect x="562" y="593" width="8" height="12"/><rect x="1034" y="593" width="9" height="12"/>
        </g>

        <g class="bub" transform="translate(.5 .5)">
          <circle cx="284" cy="181" r="12.500"/><circle cx="378" cy="181" r="12.500"/><circle cx="473" cy="181" r="12.500"/><circle cx="568" cy="181" r="12.500"/>
          <circle cx="660" cy="181" r="12.500"/><circle cx="755" cy="181" r="12.500"/><circle cx="849" cy="181" r="12.500"/><circle cx="1038" cy="181" r="12.500"/><circle cx="1133" cy="181" r="12.500"/><circle cx="1227" cy="181" r="12.500"/><circle cx="1322" cy="181" r="12.500"/>
          <circle cx="183" cy="215" r="12.500"/><circle cx="183" cy="284" r="12.500"/><circle cx="183" cy="396" r="12.500"/><circle cx="183" cy="473" r="12.500"/><circle cx="183" cy="507" r="12.500"/><circle cx="183" cy="605" r="12.500"/>
          <circle cx="424" cy="209" r="12.500"/><circle cx="424" cy="278" r="12.500"/><circle cx="424" cy="390" r="12.500"/><circle cx="424" cy="467" r="12.500"/><circle cx="424" cy="501" r="12.500"/><circle cx="424" cy="599" r="12.500"/>
        </g>

        <g class="lbl">
          <text x="284" y="186" class="gk">5</text><text x="378" y="186" class="gk">6</text><text x="473" y="186" class="gk">7</text><text x="568" y="186" class="gk">8</text>
          <text x="284" y="192">50</text><text x="378" y="192">50</text><text x="473" y="192">50</text><text x="568" y="192">50</text><text x="182" y="191" class="tight">800</text>
          <text x="660" y="186">2</text><text x="755" y="186">3</text><text x="849" y="186">4</text><text x="1038" y="186">5</text><text x="1133" y="186">6</text><text x="1227" y="186">7</text><text x="1322" y="186">8</text>
          <text x="183" y="220" class="gk">E</text><text x="183" y="289" class="gk">D</text><text x="183" y="401">C</text><text x="183" y="478">B</text><text x="183" y="512">A</text><text x="183" y="610">A1</text>
          <text x="424" y="214" class="bl">E</text><text x="424" y="283" class="bl">D</text><text x="424" y="395">C</text><text x="424" y="472" class="gk">B</text><text x="424" y="506">A</text><text x="424" y="604">A1</text>
          <text x="182" y="339" class="big">35°</text><text x="195" y="354" class="big">45°</text>
        </g>
        <g class="dim">
          <text transform="translate(543 243) rotate(-90)">2400</text>
          <text transform="translate(543 333) rotate(-90)">3920</text>
          <text transform="translate(543 426) rotate(-90)">2680</text>
          <text transform="translate(543 483) rotate(-90)" class="gk">1200</text>
          <text transform="translate(543 550) rotate(-90)">3100</text>
          <text transform="translate(500 402) rotate(-90)">13600</text>
          <text transform="translate(390 601) rotate(-90)">800</text>
        </g>
        <path d="M424.500 515v59M424.500 515l-5 6M424.500 515l5 6" class="wh2"/>
        <path d="M378 600h17M380 604h14" class="wh4"/>
        <path d="M225 624v-44" class="ax-g"/><path d="M225 576l-4 9h8z" class="ax-gf"/>
        <path d="M225 624h40" class="ax-r"/><path d="M274 624l-10-4v8z" class="ax-rf"/>
        <path d="M234 580l5 4v5M244 580l-5 4" class="gb"/>
        <path d="M263 605l8 8M271 605l-8 8" class="rd"/>
      </svg>

      <div class="row row5">
        <div class="bar">
          <i class="grip m4"></i>
          <div class="t mn1"><svg class="ic" viewBox="0 0 16 16"><path d="M1 2h11v3H5v11H2V5H1z" fill="#e5a5a5"/><path d="M8 6l5 8" stroke="#555"/></svg><span>正交</span></div>
          <div class="t sel m1"><svg class="ic" viewBox="0 0 16 16"><path d="M4 1v10M12 1v10" stroke="#a33" stroke-width="1.200"/><path d="M1 6h14" stroke="#445"/><path d="M5 14c-2-2-1-5 1-6l3-2 3 2v5l-2 2z" fill="#e5c05a" stroke="#875"/></svg><span>对象捕捉</span></div>
          <div class="t sel"><svg class="ic" viewBox="0 0 16 16"><path d="M1 2h14v2H1z" fill="#ccc" stroke="#555"/><path d="M2 4v3M14 4v3" stroke="#a33"/><rect x="2" y="8" width="12" height="7" fill="#fff" stroke="#556"/><path d="M5 10v3M8 10h3v1.500H8V13h3" stroke="#223" fill="none"/></svg><span>动态输入</span></div>
          <i class="grip m5"></i>
          <div class="t"><svg class="ic" viewBox="0 0 16 16"><path d="M2 2l12 12M14 2 2 14" stroke="#2a68b8" stroke-width="1.400"/></svg><span>交点</span></div>
          <div class="t sel m1"><svg class="ic" viewBox="0 0 16 16"><path d="M1 13h14" stroke="#1f57a8" stroke-width="1.300"/><path d="M8 2v11" stroke="#1f57a8"/><path d="M6 11h4v4H6z" fill="#1f57a8"/></svg><span>垂点</span></div>
          <div class="t sel"><svg class="ic" viewBox="0 0 16 16"><path d="M1 8h14" stroke="#1f57a8"/><path d="M5 6h6v4H5z" fill="#1f57a8"/></svg><span>中点</span></div>
          <div class="t mn2"><svg class="ic" viewBox="0 0 16 16"><path d="M8 2l6 5-2 7H4L2 7z" fill="#fff" stroke="#2a68b8" stroke-width="1.300"/></svg><span>顶点</span></div>
          <div class="t mn2"><svg class="ic" viewBox="0 0 16 16"><path d="M3 2v4M13 2v4M1 8h14M5 15l3-7 3 7M3 6l2 3M13 6l-2 3" fill="none" stroke="#2a68b8"/><circle cx="8" cy="8" r="1.500" fill="#3a3"/></svg><span>坐标</span></div>
          <i class="grip m8"></i>
          <div class="combo c6 m2"><span>不偏移</span><i class="ar"></i></div>
          <i class="sep m5"></i>
          <span class="fld m2 xl">X=</span>
          <div class="spin s1 m4"><span>0</span><i class="sp"></i></div>
          <span class="fld m2 mm">mm</span>
          <span class="fld m5 yl2">Y=</span>
          <div class="spin s1 m3"><span>0</span><i class="sp"></i></div>
          <span class="fld m2 mm">mm</span>
          <i class="sep m4"></i>
          <i class="check m4"></i>
          <span class="fld m9 dark">旋转</span>
          <div class="spin s2 m4"><span>0.000</span><i class="sp"></i></div>
          <span class="fld m4">°</span>
        </div>
      </div>
    </div>
  </div>

  <div class="status">
    <span class="c-a">X=81182 Y=14760</span>
    <span class="c-b">层高:<em>4.5m</em></span>
    <span class="c-c">底标高:<em>-0.03m</em></span>
    <span class="c-d"><em>0</em></span>
    <span class="c-e">按鼠标左键指定第一个角点，或拾取构件图元</span>
    <span class="c-f"><em>379.2 FPS</em></span>
  </div>

  <footer class="task">
    <div class="start"><svg viewBox="0 0 16 16"><path d="M0 2.500 7 1.500v6H0zM8 1.300 16 0v7.500H8zM0 8.500h7v6l-7-1zM8 8.500h8V16l-8-1.300z" fill="#fff"/></svg></div>
    <div class="search">
      <i class="ring"></i>
      <span>在这里输入你要搜索的内容</span>
      <svg class="mic" viewBox="0 0 12 18"><rect x="3.500" y="1" width="5" height="10" rx="2.500" fill="none" stroke="#999"/><path d="M1 8c0 6 10 6 10 0M6 13v3M3 16.500h6" fill="none" stroke="#999"/></svg>
    </div>
    <div class="apps">
      <div class="app-i"><svg viewBox="0 0 24 24"><path d="M11 11C5 12 2 9 2 5s4-4 7-3 3 5 2 9zM13 11c-1-6 2-9 6-9s4 4 3 7-5 3-9 2zM13 13c6-1 9 2 9 6s-4 4-7 3-3-5-2-9zM11 13c1 6-2 9-6 9s-4-4-3-7 5-3 9-2z" fill="#e4e4e4"/></svg></div>
      <div class="app-i"><svg viewBox="0 0 24 24"><path d="M20 6A10 10 0 1 0 21 16M8 12a5 5 0 0 1 9-3M17 13a5 5 0 0 1-9 2" fill="none" stroke="#bbb" stroke-width="1.500"/></svg></div>
      <div class="app-i m5"><svg viewBox="0 0 24 24"><path d="M2 13C2 6 7 2 13 2c6 0 9 4 9 11H9c0 5 7 6 12 3v5c-7 3-17 1-17-6 0-2 0-3-2-2zM9 10h7c0-4-6-4-7 0z" fill="#0a78d7"/></svg></div>
      <div class="app-i"><svg viewBox="0 0 24 24"><path d="M3 7h18v15H3z" fill="#fff"/><path d="M8 7V4c0-3 8-3 8 0v3" fill="none" stroke="#fff" stroke-width="1.500"/><path d="M8 11h3.500v3.500H8zM12.500 11H16v3.500h-3.500zM8 15.500h3.500V19H8zM12.500 15.500H16V19h-3.500z" fill="#111"/></svg></div>
      <div class="app-i"><svg viewBox="0 0 24 24"><path d="M1 4h9l2 2h11v16H1z" fill="#f7d774"/><path d="M1 10h22v12H1z" fill="#fbe58e"/><path d="M8 14h8v8H8z" fill="#37a3e6"/></svg></div>
      <div class="app-i on"><svg viewBox="0 0 24 24"><path d="M20 4C12 0 3 5 3 13s8 11 13 8c5-3 5-9 0-10-3-1-6 1-5 3 1 1 3 1 3 0" fill="none" stroke="#1a8fe8" stroke-width="4"/></svg></div>
      <div class="app-i on"><svg viewBox="0 0 24 24"><circle cx="12" cy="12" r="11" fill="#62c63c"/><path d="M6 12h12c0-7-11-8-12 0 0 6 8 8 12 4" fill="none" stroke="#fff" stroke-width="2.500"/><path d="M2 18C8 14 16 6 22 3" stroke="#8a9" fill="none"/></svg></div>
      <div class="app-i on active"><svg viewBox="0 0 24 24"><rect width="24" height="24" rx="4" fill="#0a95ef"/><path d="M12 4v11a4 4 0 0 1-6 0M12 11h7M5 10h4M15 7v7" fill="none" stroke="#fff" stroke-width="2"/></svg></div>
      <div class="app-i on"><svg viewBox="0 0 24 24"><rect width="24" height="24" rx="2" fill="#f7a11e"/><rect x="4" y="5" width="15" height="16" fill="#f7f0d0"/><path d="M7 9h8M7 12h8M7 15h5" stroke="#a96"/><path d="M12 15 20 3" stroke="#d33" stroke-width="1.500"/></svg></div>
    </div>
    <div class="cpu"><span>27%</span><span>CPU使用</span></div>
    <div class="tray">
      <svg class="caret" viewBox="0 0 12 8"><path d="M1 7l5-5 5 5" fill="none" stroke="#fff" stroke-width="1.300"/></svg>
      <svg class="plug" viewBox="0 0 16 14"><rect x="3" y="4" width="12" height="8" fill="none" stroke="#fff"/><rect x="4.500" y="5.500" width="6" height="5" fill="#fff"/><path d="M2 0v4M6 0v4" stroke="#fff"/></svg>
      <svg class="wifi" viewBox="0 0 16 16"><path d="M2 14A12 12 0 0 1 14 2M5 14a9 9 0 0 1 9-9M8 14a6 6 0 0 1 6-6" fill="none" stroke="#ccc" stroke-dasharray="1.500 1"/><circle cx="13" cy="13" r="1.500" fill="#fff"/></svg>
      <svg class="vol" viewBox="0 0 16 16"><path d="M1 5h3l4-3v12l-4-3H1z" fill="none" stroke="#fff"/><path d="M10 5c1.500 2 1.500 4 0 6M12.500 3c2.500 3 2.500 7 0 10" fill="none" stroke="#fff"/></svg>
      <svg class="kbd" viewBox="0 0 22 14"><rect x=".5" y=".5" width="21" height="13" fill="none" stroke="#fff"/><path d="M3 4h16M3 7h16" stroke="#fff" stroke-dasharray="1 1"/><path d="M6 10.500h10" stroke="#fff"/></svg>
      <span class="zh">中</span>
      <svg class="sg" viewBox="0 0 16 18"><path d="M2 2l12-1 1 13-12 3z" fill="#ee4a1d"/><path d="M11 5c-2-1-5-1-5 1 0 3 5 1 5 4 0 2-3 2-5 1" fill="none" stroke="#fff" stroke-width="2"/></svg>
    </div>
    <div class="clock"><span>16:22</span><span>2017/9/20</span></div>
    <div class="notify"><svg viewBox="0 0 16 14"><path d="M0 0h15v10H0z" fill="#fff"/><path d="M2 3h11M2 6h11" stroke="#333"/></svg><b>20</b></div>
  </footer>
</div>

<svg class="ink" viewBox="0 0 1366 768" aria-hidden="true">
  <path d="M392 122.500a100 40.500 0 1 0 200 0a100 40.500 0 1 0-200 0zM403 122.500a89 35 0 1 0 178 0a89 35 0 1 0-178 0z"/>
  <path d="M508 589a291.500 84 0 1 0 583 0a291.500 84 0 1 0-583 0zM519.500 589a280 77 0 1 0 560 0a280 77 0 1 0-560 0z"/>
</svg>

<div class="ball"><span>67</span></div>
<div class="sogou">
  <svg class="slogo" viewBox="0 0 24 27"><path d="M2 3 22 1l2 21-20 5z" fill="#f4511e"/><path d="M17 7c-3-2-8-1-8 2 0 4 8 2 8 6 0 3-5 3-8 2" fill="none" stroke="#fff" stroke-width="3"/></svg>
  <div class="sbar">
    <b>英</b>
    <svg viewBox="0 0 12 12"><path d="M2 1c1 1 1 2 0 3M9 3c1 2 0 5-2 7" fill="none" stroke="#1b7fd8" stroke-width="1.800"/></svg>
    <svg viewBox="0 0 12 16"><rect x="3.500" y="0" width="5" height="10" rx="2.500" fill="#1b7fd8"/><path d="M1 7c0 5 10 5 10 0M6 12v3M3 15.500h6" fill="none" stroke="#1b7fd8" stroke-width="1.300"/></svg>
    <svg viewBox="0 0 16 14"><rect x=".5" y="1" width="15" height="12" rx="2" fill="#1b7fd8"/><path d="M3 4.500h10M3 7h10" stroke="#fff" stroke-dasharray="1 1"/><path d="M5 10h6" stroke="#fff"/></svg>
    <svg viewBox="0 0 16 16"><circle cx="7" cy="5" r="3.500" fill="#aab4bf"/><path d="M1 15c0-4 3-6 6-6s5 2 5 6z" fill="#aab4bf"/><text x="9" y="15" class="seventeen">17</text></svg>
    <svg viewBox="0 0 14 14"><path d="M4 1 0 4l2 3 2-1v8h6V6l2 1 2-3-4-3-3 2z" fill="#1b7fd8"/></svg>
    <svg viewBox="0 0 14 14"><path d="M1 12l6-6c-1-3 1-5 4-5l-2 3 2 2 2-2c1 3-2 5-5 4l-5 6z" fill="#1b7fd8"/></svg>
  </div>
</div>
</body>
</html>
```
FILE: styles.css
```css
*{box-sizing:border-box}
html,body{margin:0;padding:0;width:1366px;height:768px;overflow:hidden;background:#f0f0f0}
body{position:relative;font:12px/1 "Noto Sans CJK SC","Liberation Sans",sans-serif;color:#222}
.app{display:flex;flex-direction:column;width:1366px;height:768px}
em{font-style:normal}

/* margin utilities used to keep toolbar items on their columns */
.m1{margin-left:1px}.m2{margin-left:2px}.m3{margin-left:3px}.m4{margin-left:4px}.m5{margin-left:5px}.m6{margin-left:6px}.m7{margin-left:7px}.m8{margin-left:8px}.m9{margin-left:9px}
.m15{margin-left:15px}.m27{margin-left:27px}.m34{margin-left:34px}.m61{margin-left:61px}
.mn1{margin-left:-1px}.mn2{margin-left:-2px}.mn3{margin-left:-3px}.mn4{margin-left:-4px}

/* title bar */
.title{height:23px;background:#fff;display:flex;align-items:center;flex:none}
.appicon{width:16px;height:16px;margin-left:2px}
.title-text{margin-left:5px;font:12.500px/1 "Open Sans","Noto Sans CJK SC",sans-serif;color:#222;white-space:nowrap;letter-spacing:.03px}
.winbtns{margin-left:auto;display:flex}
.winbtns svg{width:46px;height:23px}

/* menu row */
.menu{height:32px;flex:none;display:flex;align-items:center;padding-left:990px;background:linear-gradient(#f1f1f1,#f7f7f7)}
.hint{color:#5a2c00;width:134px;white-space:nowrap;font-size:12.500px}
.account{display:flex;align-items:center;height:28px;background:linear-gradient(#fbfbfb,#f1f1f1);width:242px;border-radius:3px}
.ava{width:16px;height:16px;margin-left:6px}
.phone{margin-left:4px;font:13px/1 "Open Sans",sans-serif;letter-spacing:-.35px;width:77px}
.account .ar{margin-left:3px}
.beans{margin-left:5px;width:48px;white-space:nowrap}
.bell{width:13px;height:17px;margin-left:10px}
.account .more{margin-left:35px}

/* toolbars */
.row{display:flex;flex:none}
.row1{height:25px}
.bar{display:flex;align-items:center;flex:none;background:linear-gradient(#fafafa,#f3f3f3);border-radius:3px}
.row1 .bar{padding-bottom:2px}
.t{display:flex;align-items:center;gap:5px;padding:0 3px 0 4px;flex:none;height:22px;white-space:nowrap}
.t span{line-height:16px}
.ic{width:16px;height:16px;flex:none;display:block}
.ib{width:16px;height:16px;flex:none;display:block}
.sigma{width:16px;text-align:center;font:bold 14px/16px "Liberation Serif",serif;color:#222}
.off{color:#9b9b9b}
.white{background:#fff}
.sep{width:1px;height:18px;background:#bdbdbd;flex:none;display:block}
.ar{width:12px;height:16px;flex:none;display:flex;align-items:center;justify-content:center;font-style:normal}
.ar::after{content:"";border:3px solid transparent;border-top:3px solid #222;border-bottom:0}
.more{width:10px;flex:none;text-align:center;font:bold 13px/12px "Liberation Sans",sans-serif;color:#222;align-self:flex-start;margin-top:3px}
.grip{width:3px;height:18px;flex:none;display:block;background:repeating-linear-gradient(#aaa 0 2px,transparent 2px 4px)}
.t.sel{background:#e3eef9;border:1px solid #2e83cc;padding:0 3px 0 1px;gap:5px}

.combo{display:flex;align-items:stretch;height:22px;flex:none;background:#f4f4f4}
.combo span{flex:1;background:#fff;padding-left:3px;line-height:22px;white-space:nowrap;overflow:hidden}
.combo .ar{height:22px;width:11px}
.wide span{letter-spacing:.7px}
.c1{width:58px}.c2{width:72px}.c3{width:71px}.c4{width:69px}.c5{width:54px}.c6{width:57px}

.work{flex:1;display:flex;min-height:0}
.right{margin-left:5px;width:1196px;display:flex;flex-direction:column}
.row2{margin-top:4px;height:24px}
.row3{margin-top:3px;height:26px}
.row4{margin-top:3px;height:28px}
.row2 .bar,.row3 .bar,.row4 .bar,.row5 .bar{height:100%}
.row3 .bar{padding-bottom:1px}
.row4 .bar{padding-bottom:3px}
.pad{padding-right:2px}
.row3 .bar:last-child{padding-right:2px}
.row4 .t.sel{height:22px}
.row5{height:31px;padding-top:1px;padding-bottom:5px}
.row5 .t.sel{height:23px}

/* canvas */
.cad{display:block;width:1196px;height:507px;flex:none;shape-rendering:crispEdges}
.bg{fill:#000}
.olive{fill:#aec46a}
.pink{stroke:#b461a6;stroke-width:2;fill:none}
.dk{stroke:#a00000;fill:none;stroke-width:1}
.thin{stroke:#7a0000}
.gr{stroke:#008000;fill:none;stroke-width:1}
.rd{stroke:#ff0000;fill:none;stroke-width:1}
.gy{stroke:#666;fill:none}
.hatch{fill:url(#hatch)}
.hl{stroke:#bdbdbd;stroke-width:.8;fill:none;shape-rendering:geometricPrecision}
.gband{fill:#b5b5b5}
.wh1{stroke:#fff;stroke-width:1;fill:none}
.wh2{stroke:#fff;stroke-width:2;fill:none}
.wh4{stroke:#fff;stroke-width:4;fill:none}
.yl{fill:#ffff00}
.wall{fill:#0000aa}
.vio{fill:#8000ff}
.pinkbeam{fill:#ff8080}
.hd rect{fill:#0a7fe8}
.bub circle{fill:none;stroke:#008000;stroke-width:1;shape-rendering:geometricPrecision}
.lbl text{font:14px "Liberation Sans",sans-serif;fill:#c4c4c4;text-anchor:middle}
.lbl .bl{fill:#8f8fe0}
.lbl .tight{letter-spacing:-2px;fill:#9a9ab0}
.lbl .big{font-size:15px}
.gk{fill:#7d7d7d !important}
.dim text{font:14px "Liberation Sans",sans-serif;letter-spacing:1px;fill:#c4c4c4;text-anchor:middle}
.ax-g{stroke:#00ff00;stroke-width:4;fill:none}
.ax-gf{fill:#00ff00}
.ax-r{stroke:#ff0000;stroke-width:4;fill:none}
.ax-rf{fill:#ff0000}
.gb{stroke:#00c000;fill:none}

/* bottom field controls */
.fld{flex:none;color:#777;white-space:nowrap}
.dark{color:#222}
.xl{width:16px}.mm{width:22px}.yl2{width:15px}
.spin{display:flex;height:23px;border:1px solid #777;background:#f8f8f8;align-items:center;justify-content:flex-end;flex:none;color:#666;font-size:12.500px}
.s1{width:57px}.s2{width:68px}
.sp{width:18px;height:100%;flex:none;position:relative;display:block}
.sp::before,.sp::after{content:"";position:absolute;left:9px;border:3px solid transparent}
.sp::before{top:2px;border-bottom-color:#555;border-top:0}
.sp::after{bottom:2px;border-top-color:#555;border-bottom:0}
.check{width:11px;height:11px;border:1px solid #777;background:#fff;flex:none;display:block}

/* left panel */
.panel{width:165px;flex:none;display:flex;flex-direction:column;padding-top:4px}
.panel-head{height:16px;display:flex;align-items:center;justify-content:space-between;background:#f0f0f0;border-top:1px solid #aaa;font-size:13px}
.panel-head span{margin-left:1px}
.pin{display:flex;gap:8px;margin-right:4px;align-items:center}
.pin svg{width:9px;height:11px}
.tab{display:block;width:165px;padding:0;background:#f0f0f0;border:1px solid #a5a5a5;border-top-color:#fff;border-left-color:#d5d5d5;font:12px/1 "Noto Sans CJK SC",sans-serif;color:#222;flex:none;box-shadow:inset 0 1px 0 #e0e0e0}
.t1{height:22px}
.t2{height:21px;margin-top:1px}
.t3{height:21px;margin-top:2px}
.t4{height:21px;margin-top:1px}
.frame{height:514px;margin-top:1px;border:1px solid #a0a0a0;border-top-color:#bbb;background:#f0f0f0;padding:0 2px 2px 1px;display:flex;flex-direction:column;flex:none}
.tree-tools{height:28px;display:flex;align-items:center;gap:4px;padding-left:5px;flex:none;background:#fff}
.tree-tools svg{width:18px;height:16px}
.tree-body{flex:1;display:flex;min-height:0;background:#fff}
.tree{width:144px;overflow:hidden;flex:none;font-size:12px;position:relative}
.node,.leaf{height:16px;display:flex;align-items:center;position:relative;white-space:nowrap}
.node span{margin-left:5px}
.chev{width:9px;height:9px;margin-left:9px;flex:none;display:block;position:relative}
.chev::after{content:"";position:absolute;left:1px;top:0;width:6px;height:6px;border:solid #555;border-width:0 1.500px 1.500px 0;transform:rotate(45deg)}
.chev.closed::after{border-color:#bbb;transform:rotate(-45deg);left:-1px;top:2px}
.folder{width:16px;height:12px;margin-left:6px;flex:none}
.kids{background:repeating-linear-gradient(#777 0 1px,transparent 1px 3px) 14px 0/1px 100% no-repeat}
.leaf{padding-left:44px}
.leaf::before{content:"";position:absolute;left:33px;top:0;height:8px;width:10px;border-left:1px dotted #777;border-bottom:1px dotted #777}
.leaf::after{content:"";position:absolute;left:33px;top:8px;height:8px;border-left:1px dotted #777}
.leaf:last-child::after{display:none}
.leaf.sel{background:linear-gradient(90deg,transparent 43px,#d9d9d9 43px,#d9d9d9 100px,transparent 100px)}
.ti{width:15px;height:15px;flex:none}
.leaf span{margin-left:5px;color:#222}
.leaf em{font:10px/1 "Liberation Mono",monospace}
.colicon{width:14px;height:14px;flex:none;margin-left:1px}
.vscroll{width:15px;flex:1;background:#f0f0f0;display:flex;flex-direction:column;align-items:center;position:relative}
.up,.down,.left,.right{display:block;width:6px;height:6px;border:solid #555;border-width:1.500px 0 0 1.500px;flex:none}
.up{transform:rotate(45deg);margin-top:6px}
.down{transform:rotate(225deg);margin-bottom:6px}
.vthumb{width:15px;height:183px;background:#cdcdcd;margin-top:auto;margin-bottom:37px}
.hscroll{height:15px;background:#f0f0f0;display:flex;align-items:center;flex:none;margin-top:2px}
.left{transform:rotate(-45deg);margin-left:9px}
.hthumb{width:102px;height:15px;background:#cdcdcd;margin-left:3px}
.hscroll .right{transform:rotate(135deg);margin-left:8px;width:6px}

/* status bar */
.status{height:22px;flex:none;display:flex;gap:2px;background:#f0f0f0;padding-top:1px;font-size:12px}
.status span{background:#f9f9f9;border:1px solid #ddd;padding-left:1px;line-height:19px;white-space:nowrap;overflow:hidden}
.status em{font:10px/1 "Liberation Mono",monospace}
.c-b{width:78px}.c-c{width:98px}.c-d{width:48px}.c-e{width:914px}.c-f{width:70px}
.status .c-a{width:148px;font:10px/19px "Liberation Mono",monospace}

/* taskbar */
.task{height:40px;flex:none;background:#070c12;display:flex;color:#fff;position:relative}
.start{width:48px;background:#000;display:flex;align-items:center;justify-content:center}
.start svg{width:16px;height:16px}
.search{width:344px;background:#2f2f2f;display:flex;align-items:center;color:#8c8c8c;font-size:13.500px}
.ring{display:block;width:18px;height:18px;border:2px solid #ddd;border-radius:50%;margin-left:10px;flex:none}
.search span{margin-left:8px;white-space:nowrap;width:270px}
.mic{width:12px;height:18px;margin-left:11px;flex:none}
.apps{display:flex;width:443px;padding-left:2px}
.app-i{width:49px;height:40px;display:flex;align-items:center;justify-content:center;position:relative;flex:none}
.app-i svg{width:24px;height:24px}
.on::after{content:"";position:absolute;left:4px;right:4px;bottom:0;height:2px;background:#76b9ed}
.active{background:#333a40}
.active::after{left:0;right:0}
.cpu{position:absolute;left:980px;top:4px;width:72px;display:flex;flex-direction:column;align-items:center;gap:5px;font:12.500px/1 "Noto Sans CJK SC",sans-serif}
.tray{position:absolute;left:1060px;top:0;height:40px;display:flex;align-items:center}
.caret{width:12px;height:8px}
.plug{width:16px;height:14px;margin-left:9px}
.wifi{width:14px;height:14px;margin-left:11px}
.vol{width:15px;height:15px;margin-left:6px}
.kbd{width:22px;height:14px;margin-left:12px}
.zh{margin-left:10px;font-size:13px}
.sg{width:16px;height:18px;margin-left:14px}
.clock{position:absolute;left:1244px;top:4px;width:64px;display:flex;flex-direction:column;align-items:center;gap:6px;font:12.500px/1 "Open Sans",sans-serif}
.notify{position:absolute;left:1326px;top:10px;width:30px;height:28px}
.notify svg{width:15px;height:14px;display:block}
.notify b{position:absolute;left:4px;top:7px;width:21px;height:21px;border-radius:50%;background:#3a3a3a;border:1px solid #999;font:bold 12px/19px "Liberation Sans",sans-serif;text-align:center}

/* overlays */
.ink{position:absolute;left:0;top:0;width:1366px;height:768px;pointer-events:none;shape-rendering:crispEdges}
.ink path{fill:#0000f0;fill-rule:evenodd}
.ball{position:absolute;left:857px;top:-30px;width:48px;height:48px;border-radius:50%;background:#3dba4e;box-shadow:0 0 0 1px #999,0 2px 2px #888;color:#fff;font:bold 12px/1 "Open Sans",sans-serif;display:flex;align-items:flex-end;justify-content:center;padding-bottom:6px}
.sogou{position:absolute;left:805px;top:23px;display:flex;align-items:center}
.slogo{width:24px;height:27px;flex:none}
.sbar{width:161px;height:22px;background:#fff;border:1px solid #bdd0e2;display:flex;align-items:center;padding-left:9px}
.sbar b{color:#1b7fd8;font-size:14px;width:16px}
.sbar svg{height:14px;width:14px;flex:none;margin-left:8px}
.seventeen{font:6px "Liberation Sans",sans-serif;fill:#667}
```
